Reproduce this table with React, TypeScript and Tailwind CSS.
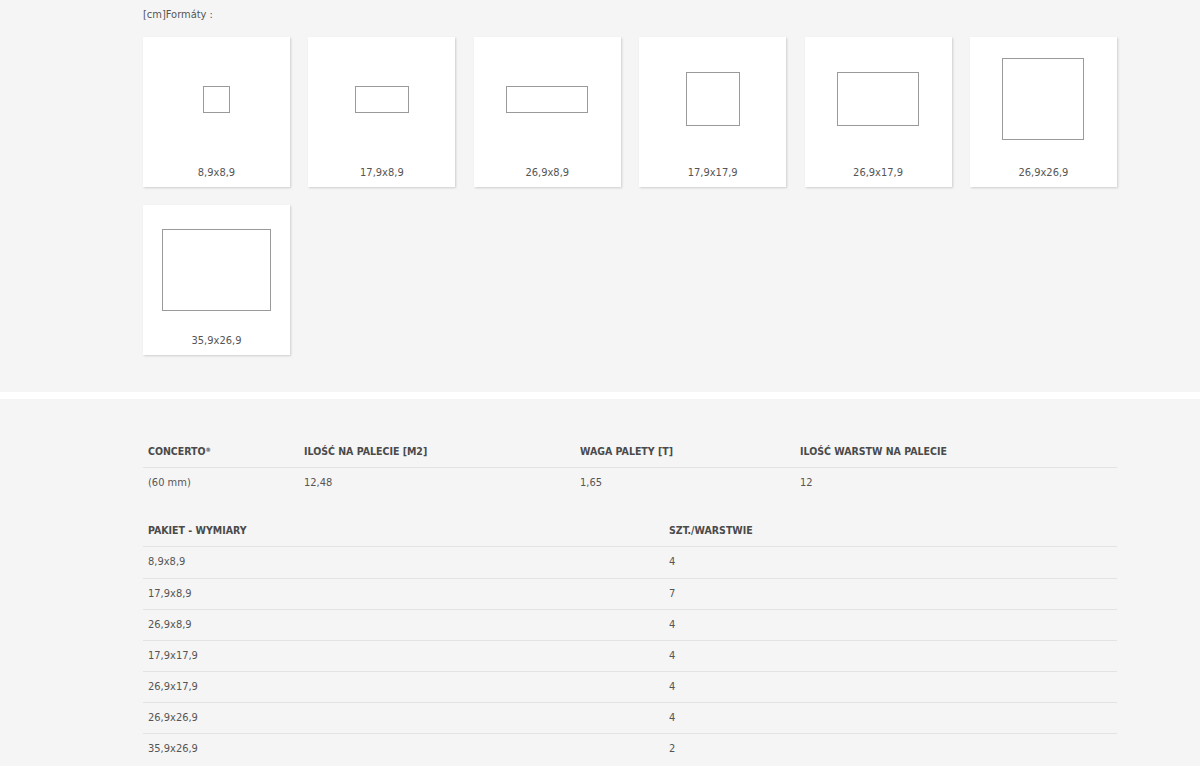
import React from "react";

const font = { fontFamily: '"DejaVu Sans Condensed", "DejaVu Sans", "Liberation Sans", sans-serif' };

type Fmt = { label: string; w: number; h: number; shift: number };
const formats: Fmt[] = [
  { label: "8,9x8,9", w: 27, h: 27, shift: 0 },
  { label: "17,9x8,9", w: 54, h: 27, shift: 0 },
  { label: "26,9x8,9", w: 82, h: 27, shift: 0 },
  { label: "17,9x17,9", w: 54, h: 54, shift: 0 },
  { label: "26,9x17,9", w: 82, h: 54, shift: 0 },
  { label: "26,9x26,9", w: 82, h: 82, shift: 0 },
  { label: "35,9x26,9", w: 109, h: 82, shift: 5 },
];

const pakiet: [string, string][] = [
  ["8,9x8,9", "4"],
  ["17,9x8,9", "7"],
  ["26,9x8,9", "4"],
  ["17,9x17,9", "4"],
  ["26,9x17,9", "4"],
  ["26,9x26,9", "4"],
  ["35,9x26,9", "2"],
];

function Card({ f }: { f: Fmt }) {
  return (
    <div className="w-[147px] h-[150px] bg-white shadow-[1px_1px_2px_rgba(0,0,0,0.16)] flex flex-col items-center">
      <div className="h-[124px] w-full flex items-center justify-center">
        <div
          className="border-[1.5px] border-[#9a9a9a] bg-white"
          style={{ width: f.w, height: f.h, marginTop: f.shift }}
        />
      </div>
      <div className="mt-[5px] text-[11px] leading-[14px] text-[#555]">{f.label}</div>
    </div>
  );
}

export default function App() {
  return (
    <div className="bg-[#f5f5f5] min-h-[766px] w-full font-stretch-condensed" style={font}>
      <section className="pt-[8px] pb-[37px]">
        <div className="ml-[143px] w-[974px]">
          <div className="text-[11px] leading-[14px] text-[#555] h-[29px]">[cm]Formáty :</div>
          <div className="flex flex-wrap gap-x-[18.4px] gap-y-[18px]">
            {formats.map((f) => (
              <Card key={f.label} f={f} />
            ))}
          </div>
        </div>
      </section>
      <div className="h-[7px] bg-white" />
      <section className="pt-[38px] pb-[20px]">
        <div className="ml-[143px] w-[974px] text-[11px]">
          <div className="flex h-[31px] items-center border-b-[1.5px] border-[#e3e3e3] text-[10.5px] font-semibold text-[#4a4a4a]">
            <div className="w-[156px] pl-[5px]">CONCERTO<sup className="text-[6px]">®</sup></div>
            <div className="w-[276px] pl-[5px]">ILOŚĆ NA PALECIE [M2]</div>
            <div className="w-[220px] pl-[5px]">WAGA PALETY [T]</div>
            <div className="flex-1 pl-[5px]">ILOŚĆ WARSTW NA PALECIE</div>
          </div>
          <div className="flex h-[30px] items-center text-[#555]">
            <div className="w-[156px] pl-[5px]">(60 mm)</div>
            <div className="w-[276px] pl-[5px]">12,48</div>
            <div className="w-[220px] pl-[5px]">1,65</div>
            <div className="flex-1 pl-[5px]">12</div>
          </div>
          <div className="h-[18px]" />
          <div className="flex h-[31px] items-center border-b-[1.5px] border-[#e3e3e3] text-[10.5px] font-semibold text-[#4a4a4a]">
            <div className="w-[526px] pl-[5px]">PAKIET - WYMIARY</div>
            <div className="flex-1">SZT./WARSTWIE</div>
          </div>
          {pakiet.map(([a, b], i) => (
            <div
              key={a}
              className={
                "flex h-[31px] items-center text-[#555] " +
                (i > 0 ? "border-t-[1.5px] border-[#e3e3e3]" : "")
              }
            >
              <div className="w-[526px] pl-[5px]">{a}</div>
              <div className="flex-1">{b}</div>
            </div>
          ))}
        </div>
      </section>
    </div>
  );
}
